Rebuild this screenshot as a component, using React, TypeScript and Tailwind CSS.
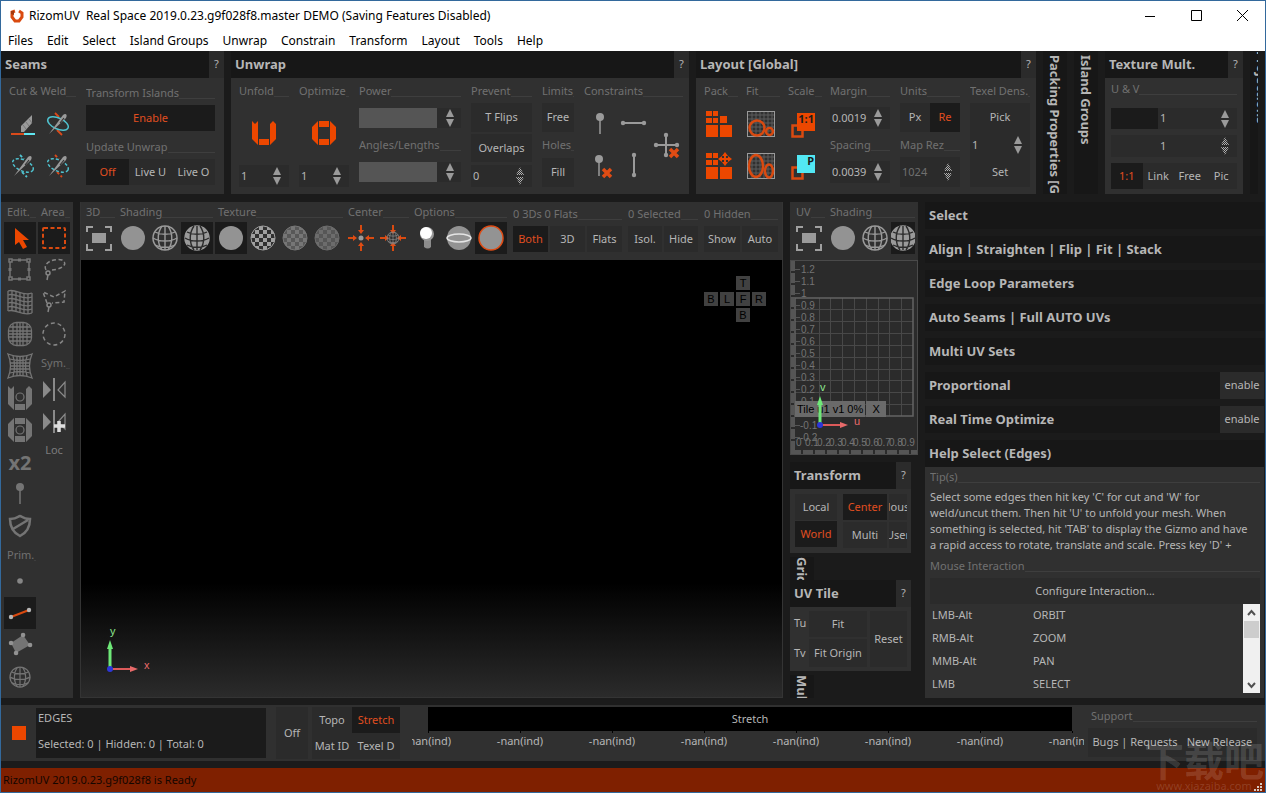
import React from 'react';

type Children = { children?: React.ReactNode };

const cx = (...parts: (string | false | undefined)[]) => parts.filter(Boolean).join(' ');

/* ---------- Basic controls ---------- */

const Label: React.FC<{ text: string; className?: string }> = ({ text, className }) => (
  <div className={cx('flex h-5 shrink-0 items-end overflow-hidden whitespace-nowrap text-[#707070]', className)}>
    <span className="leading-5">{text}</span>
    <span className="mb-1 flex-1 border-b border-[#3e3e3e]" />
  </div>
);

const Btn: React.FC<Children & { active?: boolean; className?: string }> = ({ active, className, children }) => (
  <button
    type="button"
    aria-pressed={active}
    className={cx(
      'flex shrink-0 items-center justify-center overflow-hidden whitespace-nowrap',
      active ? 'bg-[#1b1b1b] text-[#e04e20]' : 'bg-[#2b2b2b] text-[#b6b6b6]',
      className
    )}
  >
    {children}
  </button>
);

const IconBtn: React.FC<Children & { name: string; active?: boolean; narrow?: boolean }> = ({ name, active, narrow, children }) => (
  <button
    type="button"
    aria-label={name}
    className={cx('flex h-8 shrink-0 justify-center overflow-hidden', narrow ? 'w-6' : 'w-8', active && 'bg-[#1b1b1b]')}
  >
    <svg viewBox="0 0 32 32" width="32" height="32" fill="none" className="shrink-0">{children}</svg>
  </button>
);

const Arrows: React.FC<{ disabled?: boolean }> = ({ disabled }) => (
  <svg viewBox="0 0 8 18" width="8" height="18" className="shrink-0">
    <defs>
      <pattern id="hatch" width="2" height="2" patternUnits="userSpaceOnUse">
        <path d="M0 0h1v1H0zM1 1h1v1H1z" fill="#b0b0b0" />
      </pattern>
    </defs>
    <path d="M0 8 4 0l4 8zM0 10h8l-4 8z" fill={disabled ? 'url(#hatch)' : '#9a9a9a'} />
  </svg>
);

const Spin: React.FC<{ name: string; value: string; disabled?: boolean; dim?: boolean; className?: string }> = ({ name, value, disabled, dim, className }) => (
  <div className={cx('flex min-w-0 items-center bg-[#2b2b2b] pr-2', className)}>
    <input
      aria-label={name}
      defaultValue={value}
      disabled={disabled}
      className={cx('w-full min-w-0 flex-1 bg-transparent pl-0.5 outline-none', dim ? 'text-[#707070]' : 'text-[#b6b6b6]')}
    />
    <Arrows disabled={disabled} />
  </div>
);

const Slider: React.FC<{ name: string; className?: string }> = ({ name, className }) => (
  <div className={cx('flex h-5 items-center bg-[#2b2b2b] pr-[7px]', className)}>
    <input aria-label={name} className="h-5 w-[78px] bg-[#555555] outline-none" />
    <span className="flex-1" />
    <Arrows />
  </div>
);

const Heading: React.FC<{ title: string; help?: boolean; action?: string }> = ({ title, help, action }) => (
  <div className="flex h-[27px] shrink-0 items-center bg-[#171717]">
    <h2 className="flex-1 truncate pl-1 text-[13px] font-bold text-[#b6b6b6]">{title}</h2>
    {help && <button type="button" className="h-[27px] w-[15px] bg-[#2b2b2b] text-[#b6b6b6]">?</button>}
    {action && <Btn className="h-[27px] w-11">{action}</Btn>}
  </div>
);

const Panel: React.FC<Children & { title: string; className?: string; body?: string }> = ({ title, className, body, children }) => (
  <section className={cx('flex shrink-0 flex-col', className)}>
    <Heading title={title} help />
    <div className={cx('flex flex-1 bg-[#303030]', body)}>{children}</div>
  </section>
);

const SideTab: React.FC<{ text: string; className?: string }> = ({ text, className }) => (
  <button type="button" className={cx('flex shrink-0 items-start overflow-hidden bg-[#171717] text-[13px] font-bold text-[#b6b6b6]', className)}>
    <span className="shrink-0 whitespace-nowrap leading-6 [writing-mode:vertical-rl]">{text}</span>
  </button>
);

/* ---------- Icons ---------- */

const Needle: React.FC<{ thread: string; dashed?: boolean }> = ({ thread, dashed }) => (
  <>
    <path d="m13 5 4 4M15 22l5 5" stroke={thread} strokeWidth="1.8" strokeDasharray={dashed ? '3 2' : undefined} />
    <ellipse cx="16" cy="15.5" rx="11" ry="5.5" transform="rotate(24 16 15.5)" stroke="#4fc3d0" strokeWidth="1.5" strokeDasharray={dashed ? '3 2' : undefined} />
    <path d="M7 26 21 7c2-2 5-1 3 3z" fill="#9a9a9a" />
    <path d="m18 15 4-5" stroke="#303030" strokeWidth="1.2" />
  </>
);

const Seam = () => (
  <>
    <path d="m14 18 11-11v8l-8 9h-3z" fill="#9a9a9a" />
    <path d="m16 17 3 4m0-7 3 4m0-7 3 4" stroke="#777" />
    <path d="M4 26h13" stroke="#d94a1a" strokeWidth="2" />
    <path d="M17 26h11" stroke="#5fe6f0" strokeWidth="2" />
  </>
);

const LetterU: React.FC<{ fill: string; dot?: boolean }> = ({ fill, dot }) => (
  <>
    <path d="M4 4l3 3 3-3v24l-6-6zM28 7l-3-3-3 3v21l6-6zM11 22h10v6H11z" fill={fill} />
    {dot && <circle cx="16" cy="15" r="4" stroke={fill} strokeWidth="1.2" />}
  </>
);

const LetterO: React.FC<{ fill: string; dot?: boolean }> = ({ fill, dot }) => (
  <>
    <path d="M10 4v24l-6-6V10zM22 4v24l6-6V10zM11 4h10v6H11zM11 22h10v6H11z" fill={fill} />
    {dot && <circle cx="16" cy="16" r="4" stroke={fill} strokeWidth="1.2" />}
  </>
);

const Cross = () => <path d="m19 20 8 8m0-8-8 8" stroke="#e04c14" strokeWidth="3.5" />;

const Bar: React.FC<{ d: string; ends: number[][] }> = ({ d, ends }) => (
  <>
    <path d={d} stroke="#9a9a9a" strokeWidth="2" />
    {ends.map(([x, y]) => <circle key={`${x}-${y}`} cx={x} cy={y} r="2.2" fill="#9a9a9a" />)}
  </>
);

const Pack: React.FC<{ move?: boolean }> = ({ move }) => (
  <>
    <g fill="#ec4700">
      <path d="M2 3h6v5H2zM9 3h5v5H9zM2 10h6v5H2zM9 10h5v5H9zM2 17h12v12H2zM16 17h12v12H16z" />
      {!move && <path d="M16 8h7v7h-7z" />}
      {move && <path d="m21 2 3 4h-6zM21 16l3-4h-6zM14 9l4-3v6zM28 9l-4-3v6z" />}
    </g>
    {move && <path d="M16 9h10M21 4v10" stroke="#ec4700" strokeWidth="2" />}
  </>
);

const Fit: React.FC<{ tall?: boolean }> = ({ tall }) => (
  <>
    <path d="M6 3v26M10 3v26M14 3v26M18 3v26M22 3v26M26 3v26M2 7h26M2 11h26M2 15h26M2 19h26M2 23h26" stroke="#5c5c5c" />
    <rect x="1.5" y="3.5" width="27" height="25" stroke="#9a9a9a" />
    {tall ? (
      <g stroke="#d94a10" strokeWidth="2.5">
        <ellipse cx="10" cy="16" rx="7" ry="11" />
        <ellipse cx="23" cy="21" rx="4" ry="6.5" />
      </g>
    ) : (
      <g stroke="#d94a10" strokeWidth="2.5">
        <circle cx="11" cy="20" r="7.5" />
        <circle cx="23.5" cy="23.5" r="3.5" />
      </g>
    )}
  </>
);

const Scale: React.FC<{ fill: string; text: string }> = ({ fill, text }) => (
  <>
    <rect x="4.5" y="17.5" width="10" height="11" stroke="#d94a10" strokeWidth="2.5" />
    <rect x="9" y="5" width="18" height="18" fill={fill} />
    <text x="26" y="15" textAnchor="end" fontSize="11" fontWeight="bold" fill="#1b1b1b">{text}</text>
  </>
);

const FrameIcon = () => (
  <>
    <path d="M4 10V5h6M22 5h6v5M28 22v6h-6M10 28H4v-6" stroke="#a0a0a0" strokeWidth="2" />
    <rect x="9" y="11" width="14" height="10" fill="#9a9a9a" />
  </>
);

const Disc: React.FC<{ ring?: string }> = ({ ring }) => <circle cx="16" cy="16" r="12" fill="#939393" stroke={ring} strokeWidth="1.5" />;

const Globe: React.FC<{ solid?: boolean; color?: string; r?: number }> = ({ solid, color = '#9a9a9a', r = 12 }) => (
  <g transform={`translate(16 16) scale(${r / 12})`}>
    <circle r="12" stroke={color} strokeWidth="1.5" fill={solid ? color : 'none'} />
    <path
      d="M-12 0C-6 4 6 4 12 0M-10-6C-5-3 5-3 10-6M-10 7C-5 10 5 10 10 7M0-12V12M-3-12C-8-5-8 5-3 12M3-12C8-5 8 5 3 12"
      stroke={solid ? '#2b2b2b' : color}
      strokeWidth="1.4"
    />
  </g>
);

const Checker: React.FC<{ id: string; a: string; b: string }> = ({ id, a, b }) => (
  <>
    <defs>
      <pattern id={id} width="8" height="8" patternUnits="userSpaceOnUse">
        <path d="M0 0h8v8H0z" fill={b} />
        <path d="M0 0h4v4H0zM4 4h4v4H4z" fill={a} />
      </pattern>
    </defs>
    <circle cx="16" cy="16" r="12" fill={`url(#${id})`} stroke={a} />
  </>
);

const CenterArrows: React.FC<Children> = ({ children }) => (
  <>
    <path d="M16 3v6M16 29v-6M3 16h6M29 16h-6" stroke="#d94a10" strokeWidth="2" />
    <path d="m16 12-3-4h6zM16 20l-3 4h6zM12 16l-4-3v6zM20 16l4-3v6z" fill="#e04c14" />
    {children}
  </>
);

const Mirror: React.FC<{ plus?: boolean }> = ({ plus }) => (
  <>
    <path d="M5 8v17l8-8z" fill="#8a8a8a" />
    <path d="M27 9v15l-7-7z" stroke="#8a8a8a" strokeWidth="1.2" />
    <path d="M16 5v23" stroke="#8a8a8a" strokeWidth="2" />
    {plus && <path d="M21 16v11M16 21h11" stroke="#dedede" strokeWidth="3.5" />}
  </>
);

const G = '#747474';

const editTools: { name: string; active?: boolean; icon: React.ReactNode }[] = [
  { name: 'Pointer', active: true, icon: <path d="M11 6v17l4-3 4 7 4-2-4-7h6z" fill="#ec4700" /> },
  {
    name: 'Transform box',
    icon: (
      <g stroke={G} strokeWidth="1.5">
        <path d="M6 6h19v19H6z" />
        <path d="M5 5h3v3H5zM23 5h3v3h-3zM5 23h3v3H5zM23 23h3v3h-3z" fill="#303030" />
        <path d="M14 6h3M14 25h3M6 14v3M25 14v3" strokeWidth="3" />
      </g>
    ),
  },
  {
    name: 'Wave deform',
    icon: (
      <g stroke={G} strokeWidth="1.3">
        <path d="M4 5c8-3 14 6 24 2M4 9c8-3 14 6 24 2M4 13c8-3 14 6 24 2M4 17c8-3 14 6 24 2M4 21c8-3 14 6 24 2M4 25c8-3 14 6 24 2" />
        <path d="M4 5v20M8 5v20M12 6v20M16 7v20M20 8v20M24 8v20M28 7v20" />
      </g>
    ),
  },
  {
    name: 'Bulge deform',
    icon: (
      <g stroke={G} strokeWidth="1.3">
        <rect x="4.5" y="4.5" width="23" height="23" rx="8" />
        <path d="M9 6v20M13 5v22M19 5v22M23 6v20M6 9h20M5 13h22M5 19h22M6 23h20M16 5v22M5 16h22" />
      </g>
    ),
  },
  {
    name: 'Pinch deform',
    icon: (
      <g stroke={G} strokeWidth="1.3">
        <path d="M4 4q12 5 24 0q-5 12 0 24q-12-5-24 0q5-12 0-24z" />
        <path d="M9 6q3 10 0 20M13 6v20M16 6v20M19 6v20M23 6q-3 10 0 20M6 9q10 3 20 0M6 13h20M6 16h20M6 19h20M6 23q10-3 20 0" />
      </g>
    ),
  },
  { name: 'Unfold brush', icon: <LetterU fill={G} dot /> },
  { name: 'Optimize brush', icon: <LetterO fill={G} dot /> },
  { name: 'Density brush', icon: <text x="16" y="24" textAnchor="middle" fontSize="20" fontWeight="bold" fill={G}>x2</text> },
  {
    name: 'Pin brush',
    icon: (
      <>
        <circle cx="16" cy="9" r="4" fill={G} />
        <path d="M16 9v17" stroke={G} strokeWidth="1.5" />
      </>
    ),
  },
  { name: 'Protect brush', icon: <path d="M6 9c8 0 8-3 10-3s2 3 10 3c0 9-4 14-10 17C10 23 6 18 6 9zM9 19 24 10" stroke={G} strokeWidth="2.5" /> },
];

const primTools: { name: string; active?: boolean; icon: React.ReactNode }[] = [
  { name: 'Vertices', icon: <circle cx="16" cy="16" r="2.8" fill="#868686" /> },
  {
    name: 'Edges',
    active: true,
    icon: (
      <>
        <path d="m7 20 18-7" stroke="#d94a10" strokeWidth="2" />
        <circle cx="7" cy="20" r="2.2" fill="#b6b6b6" />
        <circle cx="25" cy="13" r="2.2" fill="#b6b6b6" />
      </>
    ),
  },
  {
    name: 'Polygons',
    icon: (
      <>
        <path d="m7 14 12-8 7 10-14 8z" fill={G} />
        <path d="M7 14h.1M19 6h.1M26 16h.1M12 24h.1" stroke="#929292" strokeWidth="4.5" strokeLinecap="round" />
      </>
    ),
  },
  { name: 'Islands', icon: <Globe color={G} r={10} /> },
];

const AxisGizmo: React.FC<{ up: string; right: string; className: string }> = ({ up, right, className }) => (
  <svg viewBox="0 0 50 50" width="50" height="50" className={cx('absolute font-["Liberation_Sans"]', className)}>
    <text x="5" y="8" fontSize="11" fill="#8fe88f">{up}</text>
    <text x="39" y="42" fontSize="11" fill="#e86a6a">{right}</text>
    <path d="M5 42V20" stroke="#6ee878" strokeWidth="3" />
    <path d="m5 13-3 9h6z" fill="#6ee878" />
    <path d="M5 42h20" stroke="#dc5a5a" strokeWidth="2" />
    <path d="m33 42-8-3v6z" fill="#e86a6a" />
    <circle cx="5" cy="42" r="3" fill="#2c36d8" />
  </svg>
);

/* ---------- Toolbars ---------- */

const Group: React.FC<Children & { label: string }> = ({ label, children }) => (
  <div className="flex shrink-0 flex-col">
    <Label text={label} className="pl-[3px]" />
    <div className="flex">{children}</div>
  </div>
);

const TextGroup: React.FC<{ label: string; items: string[]; active?: string; width: string }> = ({ label, items, active, width }) => (
  <div className="flex shrink-0 flex-col pt-0.5">
    <Label text={label} />
    <div className="mt-0.5 flex gap-0.5">
      {items.map((t) => <Btn key={t} active={t === active} className={cx('h-[26px]', width)}>{t}</Btn>)}
    </div>
  </div>
);

const ShadingGroup: React.FC<{ narrow?: boolean }> = ({ narrow }) => (
  <Group label="Shading">
    <IconBtn name="Flat"><Disc /></IconBtn>
    <IconBtn name="Wire"><Globe /></IconBtn>
    <IconBtn name="Flat and wire" active narrow={narrow}><Globe solid /></IconBtn>
  </Group>
);

const TopRow = () => (
  <div className="flex h-[143px] gap-[7px] overflow-hidden">
    <Panel title="Seams" className="w-[223px]" body="gap-2.5 pl-1.5">
      <div className="w-[69px] pt-[3px]">
        <Label text="Cut & Weld" className="pl-0.5" />
        <div className="mt-[7px] grid grid-cols-2 gap-y-2.5">
          <IconBtn name="Cut"><Seam /></IconBtn>
          <IconBtn name="Weld"><Needle thread="#d94a1a" /></IconBtn>
          <IconBtn name="Weld all"><Needle thread="#4fc3d0" dashed /></IconBtn>
          <IconBtn name="Weld similar"><Needle thread="#d94a1a" dashed /></IconBtn>
        </div>
      </div>
      <div className="w-[129px] pt-[5px]">
        <Label text="Transform Islands" />
        <Btn active className="mt-0.5 h-[26px] w-full">Enable</Btn>
        <Label text="Update Unwrap" className="mt-1.5" />
        <div className="mt-0.5 grid grid-cols-3">
          <Btn active className="h-[26px]">Off</Btn>
          <Btn className="h-[26px]">Live U</Btn>
          <Btn className="h-[26px]">Live O</Btn>
        </div>
      </div>
    </Panel>

    <Panel title="Unwrap" className="w-[458px]" body="gap-2.5 pl-2 pt-[3px]">
      <div className="w-[50px]">
        <Label text="Unfold" />
        <div className="my-4 flex justify-center"><IconBtn name="Unfold"><LetterU fill="#ec4700" /></IconBtn></div>
        <Spin name="Unfold iterations" value="1" className="h-[22px]" />
      </div>
      <div className="w-[50px]">
        <Label text="Optimize" />
        <div className="my-4 flex justify-center"><IconBtn name="Optimize"><LetterO fill="#ec4700" /></IconBtn></div>
        <Spin name="Optimize iterations" value="1" className="h-[22px]" />
      </div>
      <div className="w-[102px]">
        <Label text="Power" />
        <Slider name="Power" className="my-[7px]" />
        <Label text="Angles/Lengths" />
        <Slider name="Angles/Lengths" className="mt-[7px]" />
      </div>
      <div className="w-[61px]">
        <Label text="Prevent" />
        <Btn className="mt-0.5 h-[29px] w-full">T Flips</Btn>
        <Btn className="mt-0.5 h-7 w-full">Overlaps</Btn>
        <Spin name="Prevent distance" value="0" disabled className="mt-[3px] h-[22px]" />
      </div>
      <div className="w-8">
        <Label text="Limits" />
        <Btn className="mt-0.5 h-[29px] w-full">Free</Btn>
        <Label text="Holes" className="my-[3px]" />
        <Btn className="h-[29px] w-full">Fill</Btn>
      </div>
      <div className="w-[99px]">
        <Label text="Constraints" />
        <div className="mt-1.5 flex gap-0.5">
          <div className="flex flex-col gap-2.5">
            <IconBtn name="Pin">
              <circle cx="16" cy="10" r="4" fill="#9a9a9a" />
              <path d="M16 10v17" stroke="#9a9a9a" strokeWidth="1.5" />
            </IconBtn>
            <IconBtn name="Unpin">
              <circle cx="15" cy="10" r="4" fill="#9a9a9a" />
              <path d="M15 10v17" stroke="#9a9a9a" strokeWidth="1.5" />
              <Cross />
            </IconBtn>
          </div>
          <div className="flex flex-col gap-2.5">
            <IconBtn name="Horizontal"><Bar d="M5 16h21" ends={[[5, 16], [26, 16]]} /></IconBtn>
            <IconBtn name="Vertical"><Bar d="M16 6v20" ends={[[16, 6], [16, 26]]} /></IconBtn>
          </div>
          <div className="flex items-center">
            <IconBtn name="Remove constraints">
              <Bar d="M4 17h21M14 7v20" ends={[[4, 17], [25, 17], [14, 7], [14, 27]]} />
              <path d="m18 21 8 8m0-8-8 8" stroke="#e04c14" strokeWidth="3.5" />
            </IconBtn>
          </div>
        </div>
      </div>
    </Panel>

    <Panel title="Layout [Global]" className="w-[340px]" body="gap-2 pl-2 pt-[3px]">
      <div className="w-[34px]">
        <Label text="Pack" />
        <div className="mt-[7px] flex flex-col gap-2.5">
          <IconBtn name="Pack"><Pack /></IconBtn>
          <IconBtn name="Pack in place"><Pack move /></IconBtn>
        </div>
      </div>
      <div className="w-[34px]">
        <Label text="Fit" />
        <div className="mt-[7px] flex flex-col gap-2.5">
          <IconBtn name="Fit"><Fit /></IconBtn>
          <IconBtn name="Fit stretched"><Fit tall /></IconBtn>
        </div>
      </div>
      <div className="w-[34px]">
        <Label text="Scale" />
        <div className="mt-[7px] flex flex-col gap-2.5">
          <IconBtn name="Scale 1:1"><Scale fill="#ec4700" text="1:1" /></IconBtn>
          <IconBtn name="Scale to picked"><Scale fill="#52e8f4" text="P" /></IconBtn>
        </div>
      </div>
      <div className="w-[60px]">
        <Label text="Margin" />
        <Spin name="Margin" value="0.0019" className="my-1.5 h-[22px]" />
        <Label text="Spacing" />
        <Spin name="Spacing" value="0.0039" className="mt-1.5 h-[22px]" />
      </div>
      <div className="ml-0.5 w-[60px]">
        <Label text="Units" />
        <div className="mt-0.5 flex">
          <Btn className="h-[29px] w-[30px]">Px</Btn>
          <Btn active className="h-[29px] w-[30px]">Re</Btn>
        </div>
        <Label text="Map Rez" className="mt-[3px]" />
        <Spin name="Map Rez" value="1024" disabled dim className="mt-0.5 h-[30px]" />
      </div>
      <div className="ml-0.5 w-[60px]">
        <Label text="Texel Dens." />
        <Btn className="mt-0.5 h-[29px] w-full">Pick</Btn>
        <Spin name="Texel density" value="1" className="h-[26px]" />
        <Btn className="h-[29px] w-full">Set</Btn>
      </div>
    </Panel>

    <SideTab text="Packing Properties [Global]" className="w-6 pt-1" />
    <SideTab text="Island Groups" className="w-6 pt-1" />

    <Panel title="Texture Mult." className="w-[138px]" body="flex-col px-1.5 pt-px">
      <Label text="U & V" />
      <div className="mt-[9px] flex h-[21px] bg-[#2b2b2b]">
        <span className="w-[47px] shrink-0 bg-[#1b1b1b]" />
        <Spin name="U multiplier" value="1" className="flex-1" />
      </div>
      <div className="mt-1.5 flex h-[22px] bg-[#2b2b2b]">
        <span className="w-[47px] shrink-0" />
        <Spin name="V multiplier" value="1" disabled className="flex-1" />
      </div>
      <div className="mt-1.5 grid grid-cols-4">
        <Btn active className="h-[26px]">1:1</Btn>
        <Btn className="h-[26px]">Link</Btn>
        <Btn className="h-[26px]">Free</Btn>
        <Btn className="h-[26px]">Pic</Btn>
      </div>
    </Panel>
    <SideTab text="Projections" className="w-2" />
  </div>
);

const ToolColumns = () => (
  <aside className="flex w-[72px] shrink-0 gap-0.5 bg-[#303030] pl-[3px]">
    <div className="w-8">
      <Label text="Edit." className="pl-[3px]" />
      {editTools.map((t) => <IconBtn key={t.name} name={t.name} active={t.active}>{t.icon}</IconBtn>)}
      <Label text="Prim." className="mt-[3px] pl-[3px]" />
      {primTools.map((t) => <IconBtn key={t.name} name={t.name} active={t.active}>{t.icon}</IconBtn>)}
    </div>
    <div className="w-8">
      <Label text="Area" className="pl-[3px]" />
      <IconBtn name="Rectangle" active>
        <rect x="5" y="6" width="22" height="20" rx="1" stroke="#d94a10" strokeWidth="2" strokeDasharray="4 2.5" />
      </IconBtn>
      <IconBtn name="Lasso">
        <g stroke="#868686" strokeWidth="1.5">
          <path d="M8 16c-4-7 8-12 16-10 6 3 2 9-10 10" strokeDasharray="4 2.5" />
          <circle cx="10" cy="19" r="2" />
          <path d="m10 21-1 5" />
        </g>
      </IconBtn>
      <IconBtn name="Polygon lasso">
        <g stroke="#868686" strokeWidth="1.5">
          <path d="M9 17 5 6l11 5 11-6-1 11-12 1" strokeDasharray="4 2.5" />
          <circle cx="11" cy="19" r="2" />
          <path d="m11 21-1 5" />
        </g>
      </IconBtn>
      <IconBtn name="Circle"><circle cx="16" cy="16" r="11" stroke="#868686" strokeWidth="1.5" strokeDasharray="4 2.9" /></IconBtn>
      <Label text="Sym." className="mt-[3px] pl-[3px]" />
      <IconBtn name="Mirror"><Mirror /></IconBtn>
      <IconBtn name="Add mirror"><Mirror plus /></IconBtn>
      <button type="button" disabled className="h-[26px] w-8 text-[#7c7c7c]">Loc</button>
    </div>
  </aside>
);

const ViewCube = () => (
  <div className="absolute right-4 top-4 grid grid-cols-4 gap-0.5 font-['Liberation_Sans'] text-[11px] text-black">
    <button type="button" className="col-start-3 h-3.5 w-3.5 bg-[#414141] leading-none">T</button>
    <button type="button" className="col-start-1 h-3.5 w-3.5 bg-[#414141] leading-none">B</button>
    <button type="button" className="h-3.5 w-3.5 bg-[#414141] leading-none">L</button>
    <button type="button" className="h-3.5 w-3.5 bg-[#414141] leading-none">F</button>
    <button type="button" className="h-3.5 w-3.5 bg-[#414141] leading-none">R</button>
    <button type="button" className="col-start-3 h-3.5 w-3.5 bg-[#414141] leading-none">B</button>
  </div>
);

const Viewport3D = () => (
  <section className="flex min-w-0 flex-1 flex-col border border-t-0 border-[#343434] bg-[#303030]">
    <div className="flex h-[58px] shrink-0 gap-0.5 overflow-hidden pl-0.5">
      <Group label="3D"><IconBtn name="Frame"><FrameIcon /></IconBtn></Group>
      <ShadingGroup />
      <Group label="Texture">
        <IconBtn name="No texture" active><Disc /></IconBtn>
        <IconBtn name="Checker"><Checker id="ck1" a="#a0a0a0" b="#303030" /></IconBtn>
        <IconBtn name="Soft checker"><Checker id="ck2" a="#767676" b="#585858" /></IconBtn>
        <IconBtn name="Image"><Checker id="ck3" a="#6c6c6c" b="#565656" /></IconBtn>
      </Group>
      <Group label="Center">
        <IconBtn name="Center selection"><CenterArrows><circle cx="16" cy="16" r="2.5" fill="#9a9a9a" /></CenterArrows></IconBtn>
        <IconBtn name="Center object"><CenterArrows><Globe r={6} color="#8a8a8a" /></CenterArrows></IconBtn>
      </Group>
      <Group label="Options">
        <IconBtn name="Light">
          <path d="M13 16h7v9q-3 3-7 0z" fill="#8c8c8c" />
          <circle cx="16" cy="12" r="7" fill="#9a9a9a" />
          <circle cx="15" cy="11" r="6" fill="#fff" />
        </IconBtn>
        <IconBtn name="Equator">
          <Disc />
          <ellipse cx="16" cy="16" rx="12" ry="4" stroke="#e4e4e4" strokeWidth="1.5" />
        </IconBtn>
        <IconBtn name="Outline" active><Disc ring="#e04c14" /></IconBtn>
      </Group>
      <div className="ml-1 flex gap-1.5">
        <TextGroup label="0 3Ds 0 Flats" items={['Both', '3D', 'Flats']} active="Both" width="w-[35px]" />
        <TextGroup label="0 Selected" items={['Isol.', 'Hide']} width="w-[34px]" />
        <TextGroup label="0 Hidden" items={['Show', 'Auto']} width="w-9" />
      </div>
    </div>
    <div className="relative flex-1 bg-[linear-gradient(to_bottom,#000_0%,#000_74%,#2b2b2b_100%)]">
      <ViewCube />
      <AxisGizmo up="y" right="x" className="bottom-5 left-6" />
    </div>
  </section>
);

const uvRuler = ['1.2', '1.1', '1', '0.9', '0.8', '0.7', '0.6', '0.5', '0.4', '0.3', '0.2', '0.1', '-0', '-0.1', '-0.2'];

const UVCanvas = () => (
  <div className="relative h-[195px] overflow-hidden border border-[#4a4a4a] bg-[#2b2b2b]">
    <svg viewBox="0 0 126 193" width="126" height="193" className="font-['Liberation_Sans']">
      <g stroke="#484848">
        {[28, 39, 51, 63, 75, 87, 98, 110].map((x) => <path key={x} d={`M${x}.5 37V155`} />)}
        {[48, 60, 72, 84, 96, 108, 119, 131, 143].map((y) => <path key={y} d={`M4 ${y}.5H122`} />)}
      </g>
      <rect x="4" y="37" width="118" height="118" stroke="#646464" strokeWidth="1.5" fill="none" />
      <path d="M2 0V193" stroke="#555" strokeWidth="4" strokeDasharray="10 2" />
      <path d="M0 191H126" stroke="#555" strokeWidth="4" strokeDasharray="10 2" />
      <g fill="#747474" fontSize="10">
        {uvRuler.map((t, i) => <text key={t} x={t.startsWith('-') ? 9 : 10} y={12 + i * 12}>{t}</text>)}
        {uvRuler.map((t, i) => <path key={t} d={`M4 ${8.5 + i * 12}h5`} stroke="#555" />)}
        <text x="5" y="185">0</text>
        {[1, 2, 3, 4, 5, 6, 7, 8, 9].map((n) => <text key={n} x={2 + n * 12} y="185">{`0.${n}`}</text>)}
      </g>
    </svg>
    <div className="absolute left-1 top-[140px] flex h-4 gap-px font-['Liberation_Sans'] text-[11px] leading-4 text-black">
      <span className="whitespace-pre bg-[#6a6a6a] px-0.5">Tile u1 v1 0%</span>
      <button type="button" className="w-5 bg-[#6a6a6a] leading-4">X</button>
    </div>
    <AxisGizmo up="v" right="u" className="left-6 top-[122px]" />
  </div>
);

const UVColumn = () => (
  <div className="flex w-32 shrink-0 flex-col">
    <div className="flex h-[58px] shrink-0 gap-0.5 overflow-hidden bg-[#303030] pl-[3px]">
      <Group label="UV"><IconBtn name="Frame UV"><FrameIcon /></IconBtn></Group>
      <ShadingGroup narrow />
    </div>
    <UVCanvas />
    <Panel title="Transform" className="mt-[7px] w-[121px]" body="min-h-16 gap-1 px-[5px] pt-[5px] overflow-hidden">
      <div className="flex flex-col gap-px">
        <Btn className="h-[26px] w-[42px]">Local</Btn>
        <Btn active className="h-[26px] w-[42px]">World</Btn>
      </div>
      <div className="ml-0.5 flex flex-col gap-0.5">
        <Btn active className="h-[26px] w-11">Center</Btn>
        <Btn className="h-[26px] w-11">Multi</Btn>
      </div>
      <div className="-ml-1 flex flex-col gap-0.5 pl-0.5">
        <Btn className="h-[26px] w-[18px]">Mouse</Btn>
        <Btn className="h-[26px] w-[18px]">User</Btn>
      </div>
    </Panel>
    <SideTab text="Grid" className="mt-1 h-[23px] w-6" />
    <Panel title="UV Tile" className="w-[121px]" body="min-h-16 gap-px pl-1 pt-1 pr-1">
      <div className="flex w-3.5 flex-col text-[#b6b6b6]">
        <span className="h-7 leading-6">Tu</span>
        <span className="h-7 leading-7">Tv</span>
      </div>
      <div className="flex flex-col gap-0.5">
        <Btn className="h-[26px] w-[58px]">Fit</Btn>
        <Btn className="h-7 w-[58px]">Fit Origin</Btn>
      </div>
      <Btn className="ml-0.5 h-14 w-[37px]">Reset</Btn>
    </Panel>
    <SideTab text="Multi Tiles" className="mt-1 h-[23px] w-6" />
  </div>
);

const sections = [
  { title: 'Select' },
  { title: 'Align | Straighten | Flip | Fit | Stack' },
  { title: 'Edge Loop Parameters' },
  { title: 'Auto Seams | Full AUTO UVs' },
  { title: 'Multi UV Sets' },
  { title: 'Proportional', action: 'enable' },
  { title: 'Real Time Optimize', action: 'enable' },
];

const mouseRows = [
  ['LMB-Alt', 'ORBIT'],
  ['RMB-Alt', 'ZOOM'],
  ['MMB-Alt', 'PAN'],
  ['LMB', 'SELECT'],
];

const RightColumn = () => (
  <div className="flex w-[339px] shrink-0 flex-col gap-[7px]">
    {sections.map((s) => <Heading key={s.title} title={s.title} action={s.action} />)}
    <section className="flex flex-1 flex-col">
      <Heading title="Help Select (Edges)" />
      <div className="flex flex-1 flex-col bg-[#303030] pl-[5px] pr-1 text-[#b6b6b6]">
        <Label text="Tip(s)" />
        <p className="mt-0.5 whitespace-nowrap leading-4">
          Select some edges then hit key 'C' for cut and 'W' for<br />
          weld/uncut them. Then hit 'U' to unfold your mesh. When<br />
          something is selected, hit 'TAB' to display the Gizmo and have<br />
          a rapid access to rotate, translate and scale. Press key 'D' +
        </p>
        <Label text="Mouse Interaction" className="mt-[3px]" />
        <Btn className="mt-0.5 h-[26px] w-full">Configure Interaction...</Btn>
        <div className="flex">
          <table className="flex-1">
            <tbody>
              {mouseRows.map(([k, v]) => (
                <tr key={k} className="flex h-[23px] items-center">
                  <td className="w-[101px] pl-0.5">{k}</td>
                  <td className="pl-0.5">{v}</td>
                </tr>
              ))}
            </tbody>
          </table>
          <div className="flex h-[89px] w-[17px] flex-col bg-[#f0f0f0]">
            <svg viewBox="0 0 17 17" width="17" height="17" fill="none" stroke="#505050" strokeWidth="2"><path d="m5 11 3.5-4 3.5 4" /></svg>
            <div className="mx-px h-[17px] bg-[#cdcdcd]" />
            <svg viewBox="0 0 17 17" width="17" height="17" fill="none" stroke="#505050" strokeWidth="2" className="mt-auto"><path d="m5 7 3.5 4L12 7" /></svg>
          </div>
        </div>
      </div>
    </section>
  </div>
);

const BottomBar = () => (
  <div className="flex h-14 bg-[#303030] text-[#b6b6b6]">
    <button type="button" aria-label="Selection colour" className="flex w-[35px] shrink-0 items-center justify-center">
      <span className="h-3.5 w-3.5 bg-[#ec4700]" />
    </button>
    <div className="my-[3px] flex w-[230px] shrink-0 flex-col justify-between bg-[#1b1b1b] px-0.5">
      <span className="leading-5">EDGES</span>
      <span className="leading-7">Selected: 0 | Hidden: 0 | Total: 0</span>
    </div>
    <div className="my-0.5 ml-2.5 flex shrink-0 gap-1">
      <Btn className="h-[52px] w-8">Off</Btn>
      <div className="grid grid-cols-[40px_48px]">
        <Btn>Topo</Btn>
        <Btn active>Stretch</Btn>
        <Btn>Mat ID</Btn>
        <Btn>Texel D</Btn>
      </div>
    </div>
    <div className="ml-3 flex min-w-0 flex-1 flex-col overflow-hidden pt-0.5">
      <div className="ml-4 mr-3 h-6 bg-black text-center leading-6">Stretch</div>
      <div className="flex justify-center pl-1">
        {Array.from({ length: 8 }, (_, i) => (
          <div key={i} className="flex w-[92px] shrink-0 flex-col items-center">
            <span className="h-0.5 w-px bg-black" />
            <span className="leading-4">-nan(ind)</span>
          </div>
        ))}
      </div>
    </div>
    <div className="ml-1 mr-2 w-[169px] shrink-0 pt-px">
      <Label text="Support" className="pl-[3px]" />
      <div className="mt-0.5 grid grid-cols-[94px_75px]">
        <Btn className="h-[29px]">Bugs | Requests</Btn>
        <Btn className="h-[29px]">New Release</Btn>
      </div>
    </div>
  </div>
);

const menus = ['Files', 'Edit', 'Select', 'Island Groups', 'Unwrap', 'Constrain', 'Transform', 'Layout', 'Tools', 'Help'];

export default function App() {
  return (
    <div className="relative flex min-h-screen flex-col overflow-hidden border border-[#33699c] bg-[#1b1b1b] font-['Noto_Sans','Open_Sans',sans-serif] text-[11px]">
      <header className="bg-white text-black">
        <div className="flex h-[29px] items-center pl-2 text-[12px]">
          <svg viewBox="0 0 16 16" width="16" height="16" fill="none" className="mr-1 shrink-0">
            <path d="M6 3 3 4v5l3 4h4l3-4V5l-3-2" stroke="#d94a10" strokeWidth="3" />
            <path d="M2 3v3l3 1V3z" fill="#a3390f" />
          </svg>
          <h1 className="flex-1 truncate whitespace-pre">RizomUV  Real Space 2019.0.23.g9f028f8.master DEMO (Saving Features Disabled)</h1>
          <div className="flex h-full">
            <button type="button" aria-label="Minimize" className="flex w-[46px] items-center justify-center"><svg width="10" height="10" stroke="#000"><path d="M0 5.5h10" /></svg></button>
            <button type="button" aria-label="Maximize" className="flex w-[46px] items-center justify-center"><svg width="11" height="11" stroke="#000" fill="none"><path d="M.5.5h10v10H.5z" /></svg></button>
            <button type="button" aria-label="Close" className="flex w-[46px] items-center justify-center"><svg width="11" height="11" stroke="#000"><path d="m0 0 11 11M11 0 0 11" /></svg></button>
          </div>
        </div>
        <nav className="flex h-[21px] gap-3.5 pl-[7px] text-[12px] leading-5">
          {menus.map((m) => <button type="button" key={m}>{m}</button>)}
        </nav>
      </header>

      <TopRow />

      <main className="mt-2 flex flex-1 gap-[7px] pr-px">
        <ToolColumns />
        <Viewport3D />
        <UVColumn />
        <RightColumn />
      </main>

      <div className="mt-[7px]"><BottomBar /></div>
      <footer className="mt-[7px] h-6 bg-[#7f2000] pl-0.5 leading-6 text-[#140600]">RizomUV 2019.0.23.g9f028f8 is Ready</footer>

      <div className="pointer-events-none absolute bottom-0 right-0 flex w-[122px] flex-col items-center overflow-hidden text-white/15">
        <span className="whitespace-nowrap font-['Noto_Sans_CJK_SC',sans-serif] text-[40px] font-bold leading-[42px]">下载吧</span>
        <span className="leading-3">www.xiazaiba.com</span>
      </div>
      <svg viewBox="0 0 10 10" width="10" height="10" className="absolute bottom-0 right-0.5" fill="#d8c8c0">
        <path d="M7 1h2v2H7zM4 4h2v2H4zM7 4h2v2H7zM1 7h2v2H1zM4 7h2v2H4zM7 7h2v2H7z" />
      </svg>
    </div>
  );
}
